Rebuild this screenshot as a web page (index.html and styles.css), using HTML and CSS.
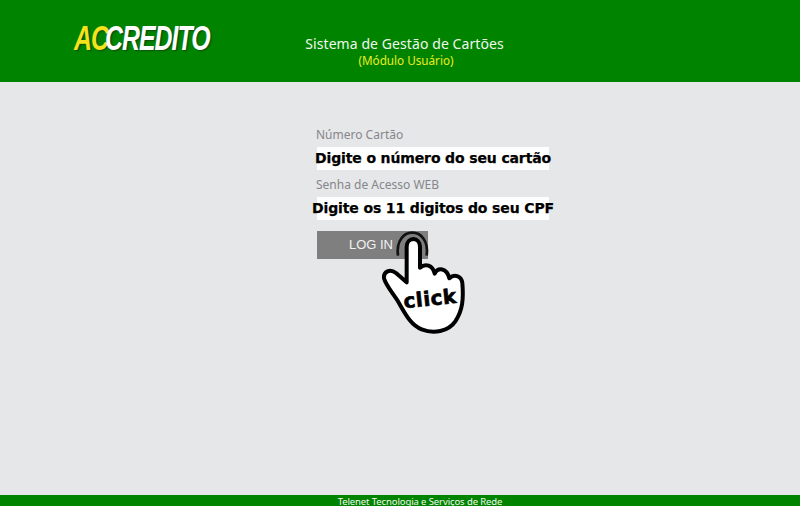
FILE: index.html
```html
<!DOCTYPE html>
<html lang="pt-BR">
<head>
<meta charset="utf-8">
<title>Sistema de Gestão de Cartões</title>
<link rel="stylesheet" href="styles.css">
</head>
<body>
<header class="top">
  <div class="logo-box">
    <div class="logo"><span class="logo-ac">AC</span><span class="logo-credito">CREDITO</span></div>
  </div>
  <div class="title">
    <div class="title-main">Sistema de Gestão de Cartões</div>
    <div class="title-sub">(Módulo Usuário)</div>
  </div>
</header>
<main class="main">
  <form class="login">
    <div class="label">Número Cartão</div>
    <div class="field"><span class="hint">Digite o número do seu cartão</span></div>
    <div class="label label-second">Senha de Acesso WEB</div>
    <div class="field"><span class="hint">Digite os 11 digitos do seu CPF</span></div>
    <div class="button">LOG IN</div>
    <svg class="hand" viewBox="0 0 510 345" width="170" height="115" aria-hidden="true">
      <path class="ring" d="M264 98C258 52 282 29 307 29C332 29 356 52 350 98" />
      <path class="palm" d="M290 178L290 72C290 40 330 40 330 72L330 134C346 120 368 126 374 152C384 132 410 134 418 166C432 152 454 158 457 180C461 228 458 262 436 295C415 326 370 333 335 319C300 305 285 270 262 232C245 205 228 188 222 166C220 146 240 136 258 150Z" />
      <text class="click" x="283" y="256" transform="rotate(-6 283 256)">click</text>
    </svg>
  </form>
</main>
<footer class="bottom">Telenet Tecnologia e Serviços de Rede</footer>
</body>
</html>
```

FILE: styles.css
```css
* { box-sizing: border-box; }
html, body { height: 100%; margin: 0; }
body {
  display: flex;
  flex-direction: column;
  height: 506px;
  overflow: hidden;
  background: #e6e7e9;
  font-family: "Noto Sans", "DejaVu Sans", sans-serif;
}
.top {
  display: flex;
  flex: 0 0 82px;
  background: #008400;
  padding-left: 74px;
}
.logo-box { width: 231px; padding-top: 16px; }
.logo {
  font: italic bold 35px/44px "Liberation Sans", sans-serif;
  letter-spacing: -1.4px;
  white-space: nowrap;
  text-shadow: 2px 1px 2px #0b4d0b;
  transform: scaleX(.71);
  transform-origin: left center;
}
.logo-ac { color: #f4e31a; }
.logo-credito { color: #fff; margin-left: -4px; }
.title {
  width: 199px;
  padding-top: 34px;
  text-align: center;
  white-space: nowrap;
}
.title-main { color: #f1f7ee; font-size: 14px; line-height: 19px; letter-spacing: .08px; }
.title-sub { color: #ecec20; font-size: 11.7px; line-height: 14px; padding-left: 3px; }
.main { flex: 1; padding: 44px 0 0 317px; }
.login { position: relative; width: 232px; }
.label {
  height: 21px;
  color: #85868a;
  font-size: 12px;
  line-height: 17px;
  margin-left: -1px;
}
.label-second { height: 27px; padding-top: 6px; }
.field {
  display: flex;
  justify-content: center;
  height: 23px;
  background: #fff;
  white-space: nowrap;
}
.hint {
  color: #000;
  font: bold 14px/23px "DejaVu Sans", sans-serif;
  letter-spacing: -.13px;
  -webkit-text-stroke: .25px #000;
}
.button {
  width: 111px;
  height: 28px;
  margin-top: 11px;
  padding-right: 35px;
  background: #7f7f7f;
  color: #f2f2f2;
  font: 13px/28px "Liberation Sans", sans-serif;
  text-align: right;
}
.hand { position: absolute; left: -7px; top: 97px; }
.ring { fill: none; stroke: #111; stroke-width: 8; }
.palm { fill: #fff; stroke: #000; stroke-width: 12; stroke-linejoin: round; }
.click { font: bold 60px "DejaVu Sans", sans-serif; fill: #000; stroke: #000; stroke-width: 2; letter-spacing: 1.5px; }
.bottom {
  flex: 0 0 11px;
  overflow: hidden;
  background: #008400;
  color: #f1f7ee;
  font-size: 9.5px;
  line-height: 13px;
  letter-spacing: -.1px;
  text-align: center;
  padding-left: 40px;
}
```
